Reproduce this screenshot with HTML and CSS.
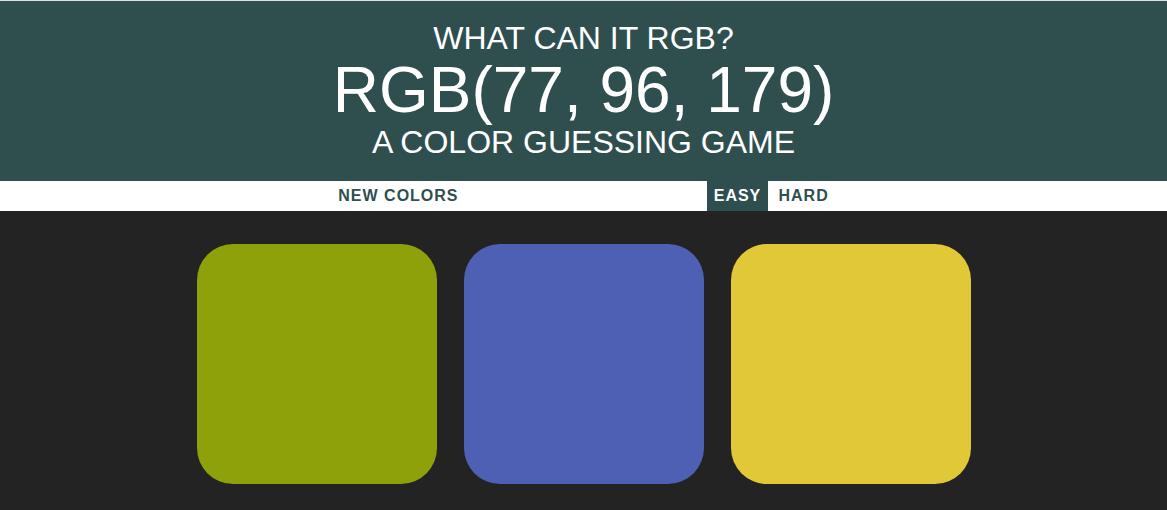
FILE: index.html
```html
<!DOCTYPE html>
<html lang="en">
<head>
<meta charset="utf-8">
<title>Color Game</title>
<link rel="stylesheet" href="styles.css">
</head>
<body>
<header class="header">
  <div class="title-top">What can it RGB?</div>
  <div class="title-color">RGB(77, 96, 179)</div>
  <div class="title-bottom">A Color Guessing Game</div>
</header>
<nav class="stripe">
  <button class="btn">New Colors</button>
  <span class="message"></span>
  <button class="btn selected">Easy</button>
  <button class="btn">Hard</button>
</nav>
<main class="container">
  <div class="square sq-green"></div>
  <div class="square sq-blue"></div>
  <div class="square sq-yellow"></div>
</main>
</body>
</html>
```
FILE: styles.css
```css
html, body {
  margin: 0;
  padding: 0;
}
body {
  background: #232323;
  font-family: "Liberation Sans", Arial, sans-serif;
  border-top: 1px solid #e2e2e2;
}
.header {
  background: #2f4f4f;
  color: #ffffff;
  text-align: center;
  text-transform: uppercase;
  padding: 19px 0 21px;
}
.title-top,
.title-bottom {
  font-size: 32px;
  line-height: 36px;
}
.title-color {
  font-size: 64px;
  line-height: 68px;
}
.stripe {
  background: #ffffff;
  height: 30px;
  display: flex;
  justify-content: center;
  align-items: stretch;
  gap: 4.6px;
}
.btn {
  border: none;
  background: #ffffff;
  color: #2f4f4f;
  font-family: "Liberation Sans", Arial, sans-serif;
  font-size: 16px;
  font-weight: 700;
  letter-spacing: 1px;
  text-transform: uppercase;
  padding: 0 6px;
  margin: 0;
  height: 30px;
  line-height: 30px;
}
.btn.selected {
  background: #2f4f4f;
  color: #ffffff;
  padding: 0 6.6px 0 7px;
}
.message {
  width: 233px;
}
.container {
  width: 800px;
  margin: 33px auto 0;
  display: flex;
  gap: 27px;
  padding: 0 13px;
  box-sizing: border-box;
}
.square {
  width: 240px;
  height: 240px;
  border-radius: 36px;
}
.sq-green { background: rgb(142, 160, 10); }
.sq-blue { background: rgb(77, 96, 179); }
.sq-yellow { background: rgb(225, 200, 55); }
```
